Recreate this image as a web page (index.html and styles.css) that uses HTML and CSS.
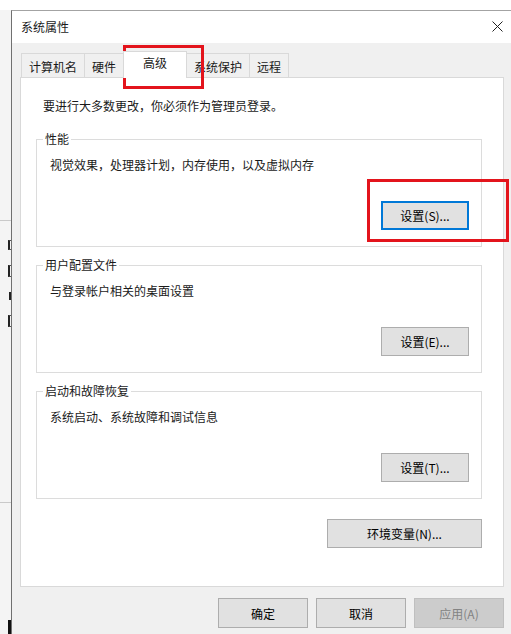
FILE: index.html
```html
<!DOCTYPE html>
<html lang="zh-CN">
  <head>
    <meta charset="UTF-8" />
    <meta name="viewport" content="width=device-width, initial-scale=1.0" />
    <title>系统属性</title>
    <link rel="stylesheet" href="styles.css">
  </head>
  <body>
    <div class="desk">
      <div class="behind">
        <div class="behind-line"></div>
        <div class="behind-bits">
          <span class="bit"></span>
          <span class="bit tall"></span>
          <span class="bit short"></span>
          <span class="bit tall"></span>
        </div>
        <div class="behind-line low"></div>
        <div class="behind-block"></div>
      </div>

      <div class="window">
        <div class="titlebar">
          <span class="title">系统属性</span>
          <svg class="close" width="11" height="11" viewBox="0 0 11 11">
            <path d="M0.5 0.5L10.5 10.5M10.5 0.5L0.5 10.5" stroke="#222" stroke-width="1" />
          </svg>
        </div>

        <div class="client">
          <div class="tabs">
            <div class="tab">计算机名</div>
            <div class="tab">硬件</div>
            <div class="tab active">高级</div>
            <div class="tab">系统保护</div>
            <div class="tab">远程</div>
          </div>

          <div class="panel">
            <p class="intro">要进行大多数更改，你必须作为管理员登录。</p>

            <fieldset class="group">
              <legend>性能</legend>
              <p>视觉效果，处理器计划，内存使用，以及虚拟内存</p>
              <button class="btn default">设置(S)...</button>
            </fieldset>

            <fieldset class="group">
              <legend>用户配置文件</legend>
              <p>与登录帐户相关的桌面设置</p>
              <button class="btn">设置(E)...</button>
            </fieldset>

            <fieldset class="group">
              <legend>启动和故障恢复</legend>
              <p>系统启动、系统故障和调试信息</p>
              <button class="btn">设置(T)...</button>
            </fieldset>

            <button class="btn env">环境变量(N)...</button>
          </div>

          <div class="actions">
            <button class="btn">确定</button>
            <button class="btn">取消</button>
            <button class="btn" disabled>应用(A)</button>
          </div>
        </div>
      </div>
    </div>

    <!-- 标注框 -->
    <div class="mark mark-tab"></div>
    <div class="mark mark-btn"></div>
  </body>
</html>
```

FILE: styles.css
```css
* {
  box-sizing: border-box;
}

body {
  margin: 0;
  font-family: "Noto Sans CJK SC", "Microsoft YaHei", sans-serif;
  font-size: 12px;
  color: #1a1a1a;
  background: #fff;
  overflow: hidden;
}

.desk {
  display: flex;
  height: 634px;
}

/* window behind, only a sliver shows */
.behind {
  width: 11px;
  flex: none;
  margin-top: 10px;
  background: #f4f4f4;
  display: flex;
  flex-direction: column;
  overflow: hidden;
}

.behind-line {
  height: 1px;
  margin-top: 210px;
  background: #c9c9c9;
}

.behind-line.low {
  margin-top: 175px;
}

.behind-bits {
  margin-top: 19px;
  padding-left: 8px;
  display: flex;
  flex-direction: column;
  gap: 15px;
}

.bit {
  width: 3px;
  height: 10px;
  border-left: 2px solid #222;
  border-top: 1px solid #555;
  border-bottom: 1px solid #555;
}

.bit.tall {
  height: 12px;
}

.bit.short {
  height: 8px;
  border-top: none;
  border-bottom: none;
  margin-left: 1px;
}

.behind-block {
  margin-top: auto;
  margin-left: 8px;
  height: 14px;
  background: #111;
}

.window {
  flex: 1;
  min-width: 0;
  margin-top: 10px;
  border-top: 1px solid #a3a3a3;
  border-left: 1px solid #707070;
  background: #f0f0f0;
}

.titlebar {
  height: 32px;
  background: #fff;
  display: flex;
  align-items: center;
  justify-content: space-between;
  padding: 0 8px 0 9px;
}

.title {
  line-height: 16px;
}

.close {
  margin-top: -1px;
}

.client {
  padding: 8px 0 0 8px;
}

.tabs {
  display: flex;
  align-items: flex-end;
  padding-left: 1px;
}

.tab {
  padding: 5px 7px 2px;
  line-height: 16px;
  border: 1px solid #d9d9d9;
  border-bottom: none;
  margin-right: -1px;
  background: #f0f0f0;
}

.tab.active {
  position: relative;
  z-index: 1;
  padding: 3px 19px 7px;
  margin-bottom: -1px;
  background: #fff;
}

.panel {
  width: 484px;
  background: #fff;
  border: 1px solid #d9d9d9;
  padding: 20px 21px 38px 15px;
}

.intro {
  margin: 0 0 17px 7px;
  line-height: 16px;
}

.group {
  margin: 0 0 10px;
  padding: 10px 12px 16px 13px;
  border: 1px solid #dcdcdc;
  min-width: 0;
}

.group legend {
  padding: 0 2px;
  margin-left: -7px;
  line-height: 16px;
}

.group p {
  margin: 0;
  line-height: 16px;
}

.btn {
  width: 88px;
  height: 29px;
  padding: 0;
  background: #e1e1e1;
  border: 1px solid #adadad;
  font: inherit;
  color: #000;
}

.btn.default {
  border: 2px solid #0078d7;
}

.btn:disabled {
  background: #cccccc;
  border-color: #bfbfbf;
  color: #838383;
}

.group .btn {
  display: block;
  margin: 28px 0 0 auto;
}

.env {
  display: block;
  width: 155px;
  margin: 20px 0 0 auto;
}

.actions {
  width: 484px;
  display: flex;
  justify-content: flex-end;
  gap: 8px;
  margin-top: 11px;
}

.actions .btn {
  width: 90px;
  height: 30px;
}

.mark {
  position: absolute;
  border: 3px solid #e3141c;
}

.mark-tab {
  left: 123px;
  top: 45px;
  width: 81px;
  height: 44px;
}

.mark-btn {
  left: 367px;
  top: 179px;
  width: 142px;
  height: 63px;
}
```
